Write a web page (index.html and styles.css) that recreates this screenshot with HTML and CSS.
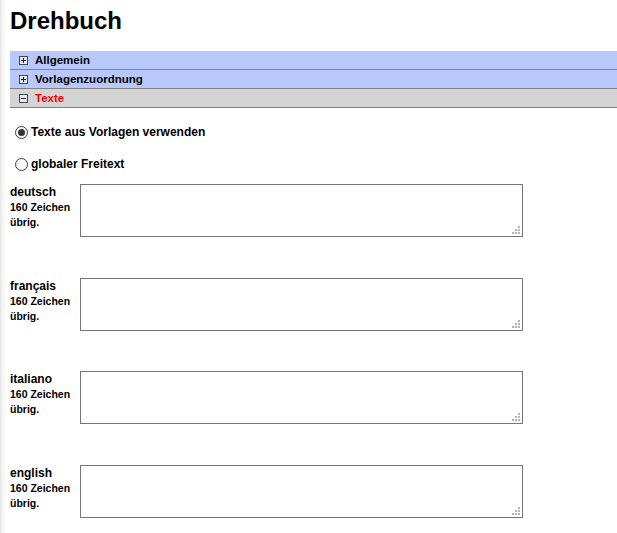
FILE: index.html
```html
<!DOCTYPE html>
<html lang="de">
<head>
<meta charset="utf-8">
<title>Drehbuch</title>
<link rel="stylesheet" href="styles.css">
</head>
<body>
<h1 class="title">Drehbuch</h1>
<div class="accordion">
  <div class="acc-head acc-closed">
    <svg class="acc-icon" width="9" height="9" viewBox="0 0 9 9"><rect x="0.5" y="0.5" width="8" height="8" fill="#e9edf3" stroke="#3d4a5c"/><path d="M2 4.5h5M4.5 2v5" stroke="#1a2230" stroke-width="1"/></svg>
    <span class="acc-label">Allgemein</span>
  </div>
  <div class="acc-head acc-closed">
    <svg class="acc-icon" width="9" height="9" viewBox="0 0 9 9"><rect x="0.5" y="0.5" width="8" height="8" fill="#e9edf3" stroke="#3d4a5c"/><path d="M2 4.5h5M4.5 2v5" stroke="#1a2230" stroke-width="1"/></svg>
    <span class="acc-label">Vorlagenzuordnung</span>
  </div>
  <div class="acc-head acc-open">
    <svg class="acc-icon" width="9" height="9" viewBox="0 0 9 9"><rect x="0.5" y="0.5" width="8" height="8" fill="#e9edf3" stroke="#3d4a5c"/><path d="M2 4.5h5" stroke="#1a2230" stroke-width="1"/></svg>
    <span class="acc-label acc-label-active">Texte</span>
  </div>
</div>
<div class="content">
  <label class="radio-line"><input type="radio" name="mode" class="radio" checked><span>Texte aus Vorlagen verwenden</span></label>
  <label class="radio-line"><input type="radio" name="mode" class="radio"><span>globaler Freitext</span></label>
  <div class="rows">
    <div class="row">
      <div class="lang"><div class="lang-name">deutsch</div><div class="count">160 Zeichen<br>übrig.</div></div>
      <textarea class="text"></textarea>
    </div>
    <div class="row">
      <div class="lang"><div class="lang-name">français</div><div class="count">160 Zeichen<br>übrig.</div></div>
      <textarea class="text"></textarea>
    </div>
    <div class="row">
      <div class="lang"><div class="lang-name">italiano</div><div class="count">160 Zeichen<br>übrig.</div></div>
      <textarea class="text"></textarea>
    </div>
    <div class="row">
      <div class="lang"><div class="lang-name">english</div><div class="count">160 Zeichen<br>übrig.</div></div>
      <textarea class="text"></textarea>
    </div>
  </div>
</div>
</body>
</html>
```
FILE: styles.css
```css
html {
  background: #fff;
}
body {
  margin: 0;
  padding: 7px 0 0 10px;
  min-height: 533px;
  box-sizing: border-box;
  font-family: "Liberation Sans", Arial, sans-serif;
  color: #000;
  background: linear-gradient(to right, #e6e6e6 0, #f6f6f6 3px, #fff 6px);
  overflow: hidden;
}
.title {
  margin: 0;
  font-size: 24px;
  line-height: 28px;
  font-weight: bold;
}
.accordion {
  margin-top: 16px;
}
.acc-head {
  height: 18px;
  border-bottom: 1px solid #808080;
  display: flex;
  align-items: center;
}
.acc-closed {
  background: #b8c8fb;
}
.acc-open {
  background: #d4d4d4;
}
.acc-icon {
  margin-left: 9px;
  margin-right: 7px;
  flex: none;
}
.acc-label {
  font-size: 11.5px;
  font-weight: bold;
  line-height: 18px;
}
.acc-label-active {
  color: #ff0000;
}
.content {
  padding-top: 14px;
}
.radio-line {
  display: flex;
  align-items: center;
  height: 20px;
  margin-bottom: 12px;
  font-size: 12px;
  font-weight: bold;
}
.radio-line + .radio-line {
  margin-bottom: 10px;
}
.radio {
  appearance: none;
  -webkit-appearance: none;
  margin: 0 3px 0 5px;
  width: 13px;
  height: 13px;
  border: 1px solid #3a3a3a;
  border-radius: 50%;
  background: #fff;
  box-sizing: border-box;
  position: relative;
  flex: none;
}
.radio:checked::after {
  content: "";
  position: absolute;
  left: 2px;
  top: 2px;
  width: 7px;
  height: 7px;
  border-radius: 50%;
  background: #333;
}
.row {
  display: flex;
  align-items: flex-start;
  margin-bottom: 40.7px;
}
.lang {
  width: 70px;
  flex: none;
}
.lang-name {
  font-size: 12px;
  font-weight: bold;
  line-height: 15px;
  padding-top: 1px;
}
.count {
  font-size: 10.5px;
  font-weight: bold;
  line-height: 15px;
}
.text {
  width: 443px;
  height: 53px;
  box-sizing: border-box;
  margin: 0;
  border: 1px solid #767676;
  border-radius: 0;
  padding: 2px;
  font-family: "Liberation Sans", Arial, sans-serif;
  font-size: 12px;
  resize: none;
  background-color: #fff;
  background-image:
    linear-gradient(#b4b4b4, #b4b4b4),
    linear-gradient(#b4b4b4, #b4b4b4),
    linear-gradient(#b4b4b4, #b4b4b4),
    linear-gradient(#b4b4b4, #b4b4b4),
    linear-gradient(#b4b4b4, #b4b4b4),
    linear-gradient(#b4b4b4, #b4b4b4);
  background-size: 2px 2px;
  background-repeat: no-repeat;
  background-position:
    right 2px bottom 2px,
    right 5px bottom 2px,
    right 8px bottom 2px,
    right 2px bottom 5px,
    right 5px bottom 5px,
    right 2px bottom 8px;
}
```
